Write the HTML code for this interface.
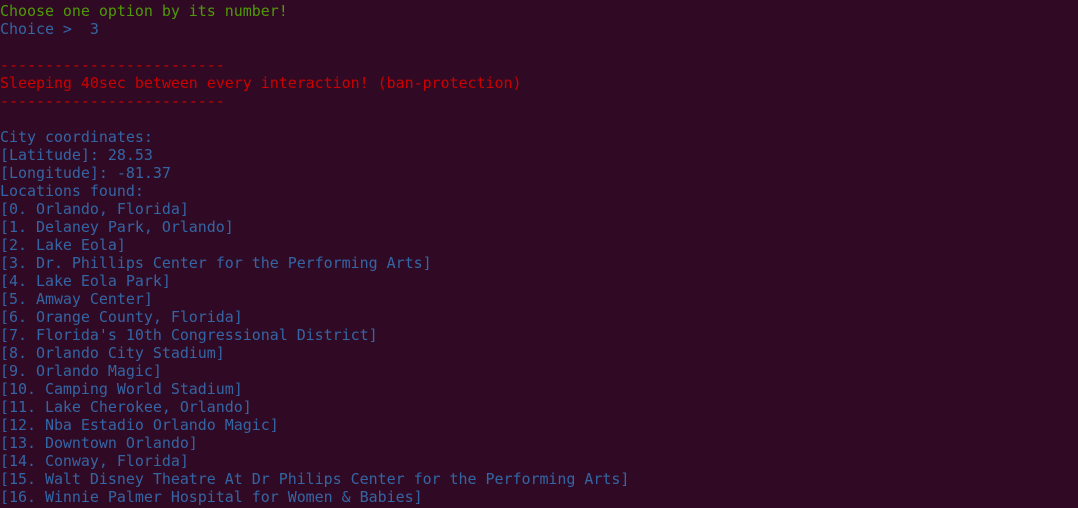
<!DOCTYPE html>
<html><head><meta charset="utf-8"><style>
html,body{margin:0;padding:0;background:#300a24;width:1078px;height:508px;overflow:hidden}
pre{margin:0;padding:2px 0 0 0;font-family:"DejaVu Sans Mono","Liberation Mono",monospace;font-size:15px;line-height:18px;color:#3465a4;white-space:pre;letter-spacing:-0.04px}
.g{color:#4e9a06}.r{color:#cc0000}
</style></head><body><pre><span class="g">Choose one option by its number!</span>
Choice &gt;  3

<span class="r">-------------------------
Sleeping 40sec between every interaction! (ban-protection)
-------------------------</span>

City coordinates:
[Latitude]: 28.53
[Longitude]: -81.37
Locations found:
[0. Orlando, Florida]
[1. Delaney Park, Orlando]
[2. Lake Eola]
[3. Dr. Phillips Center for the Performing Arts]
[4. Lake Eola Park]
[5. Amway Center]
[6. Orange County, Florida]
[7. Florida's 10th Congressional District]
[8. Orlando City Stadium]
[9. Orlando Magic]
[10. Camping World Stadium]
[11. Lake Cherokee, Orlando]
[12. Nba Estadio Orlando Magic]
[13. Downtown Orlando]
[14. Conway, Florida]
[15. Walt Disney Theatre At Dr Philips Center for the Performing Arts]
[16. Winnie Palmer Hospital for Women &amp; Babies]</pre></body></html>
